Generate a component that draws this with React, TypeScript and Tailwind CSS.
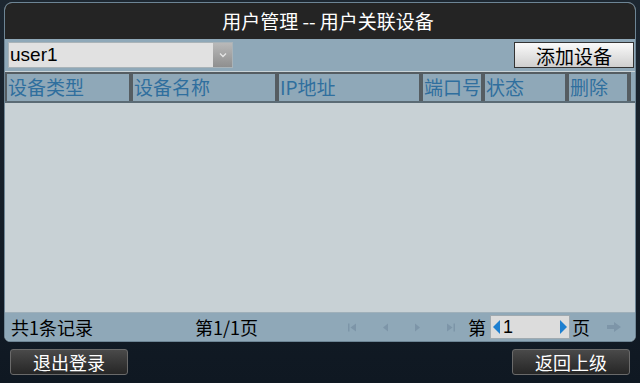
import React from 'react'

const cols = [
    { label: '设备类型', w: 'w-[126px]' },
    { label: '设备名称', w: 'w-[146px]' },
    { label: 'IP地址', w: 'w-[144px]' },
    { label: '端口号', w: 'w-[62px]' },
    { label: '状态', w: 'w-[84px]' },
    { label: '删除', w: 'w-[62px]' },
]

const NavIcon = ({ d }: { d: string }) => (
    <svg width="10" height="11" viewBox="0 0 10 10" className="fill-[#7d95a8]">
        <path d={d} />
    </svg>
)

const App = () => {
    return (
        <div className="w-[640px] h-[383px] bg-gradient-to-b from-[#1d2731] to-[#0f1822] flex flex-col overflow-hidden" style={{ fontFamily: '"Noto Sans CJK SC", "Liberation Sans", sans-serif' }}>
            <div className="ml-[4px] mr-[4px] mt-[2px] h-[340px] rounded-t-[8px] rounded-b-[6px] border border-[#6d8595] bg-[#c8d1d5] flex flex-col overflow-hidden">
                <div className="h-[36px] bg-[#242424] flex items-center justify-center text-white text-[19px] pl-[16px]">
                    用户管理 -- 用户关联设备
                </div>
                <div className="h-[33px] bg-[#8fa8b8] flex items-center justify-between pl-[3px] pr-[1px] border-b border-[#c9d3d7]">
                    <div className="flex h-[26px] w-[225px] border border-[#a9b3b8]">
                        <div className="flex-1 bg-[#e1e1e1] text-[19px] leading-[24px] pl-[1px] text-black" style={{ fontFamily: '"Liberation Sans", sans-serif' }}>user1</div>
                        <div className="w-[19px] bg-gradient-to-b from-[#b9b9b9] to-[#8f8f8f] flex items-center justify-center">
                            <svg width="8" height="6" viewBox="0 0 8 6"><path d="M1 1.5 L4 4.5 L7 1.5" stroke="#e6e6e6" strokeWidth="1.3" fill="none" /></svg>
                        </div>
                    </div>
                    <div className="w-[120px] h-[26px] border border-[#333] bg-gradient-to-b from-[#fafafa] to-[#cfcfcf] flex items-center justify-center text-[19px] leading-none text-black">
                        添加设备
                    </div>
                </div>
                <div className="h-[31px] bg-[#8fa8b8] flex border-b-[2px] border-[#5b6b75]">
                    {cols.map((c) => (
                        <div key={c.label} className={`${c.w} h-full border-[2px] border-b-0 border-[#555d62] text-[#2f6f9e] text-[19px] leading-[26px] pl-[1px] shrink-0 overflow-hidden whitespace-nowrap`}>
                            {c.label}
                        </div>
                    ))}
                    <div className="flex-1 border-l-[2px] border-[#555d62]" />
                </div>
                <div className="flex-1 bg-[#c8d1d5]" />
                <div className="h-[29px] bg-[#8fa8b8] border-t border-[#9fb0ba] flex items-center text-[18px] leading-none text-black">
                    <div className="w-[190px] pl-[6px]">共1条记录</div>
                    <div className="w-[152px]">第1/1页</div>
                    <div className="flex items-center gap-[23px]">
                        <NavIcon d="M1 1 H2.5 V9 H1 Z M9 1 L3.5 5 L9 9 Z" />
                        <NavIcon d="M8 1 L3 5 L8 9 Z" />
                        <NavIcon d="M2 1 L7 5 L2 9 Z" />
                        <NavIcon d="M1 1 L6.5 5 L1 9 Z M7.5 1 H9 V9 H7.5 Z" />
                    </div>
                    <div className="ml-[12px]">第</div>
                    <div className="ml-[4px] w-[80px] h-[24px] bg-[#dcdcdc] border border-[#a0aab0] flex items-center">
                        <svg width="9" height="16" viewBox="0 0 9 16" className="ml-[1px]"><path d="M8 1 L1 8 L8 15 Z" fill="#1d7fd0" /></svg>
                        <span className="flex-1 pl-[2px]" style={{ fontFamily: '"Liberation Sans", sans-serif' }}>1</span>
                        <svg width="9" height="16" viewBox="0 0 9 16" className="mr-[1px]"><path d="M1 1 L8 8 L1 15 Z" fill="#1d7fd0" /></svg>
                    </div>
                    <div className="ml-[2px]">页</div>
                    <svg width="16" height="12" viewBox="0 0 16 12" className="ml-[16px]"><path d="M1 4 H8 V1 L15 6 L8 11 V8 H1 Z" fill="#7d95a8" /></svg>
                </div>
            </div>
            <div className="flex-1 flex items-center justify-between px-[10px] pb-[2px]">
                <div className="w-[118px] h-[26px] rounded-[3px] border border-[#6a6a6a] bg-gradient-to-b from-[#4a4a4a] to-[#262626] text-white text-[18px] leading-none flex items-center justify-center">退出登录</div>
                <div className="w-[118px] h-[26px] rounded-[3px] border border-[#6a6a6a] bg-gradient-to-b from-[#4a4a4a] to-[#262626] text-white text-[18px] leading-none flex items-center justify-center">返回上级</div>
            </div>
        </div>
    )
}

export default App
